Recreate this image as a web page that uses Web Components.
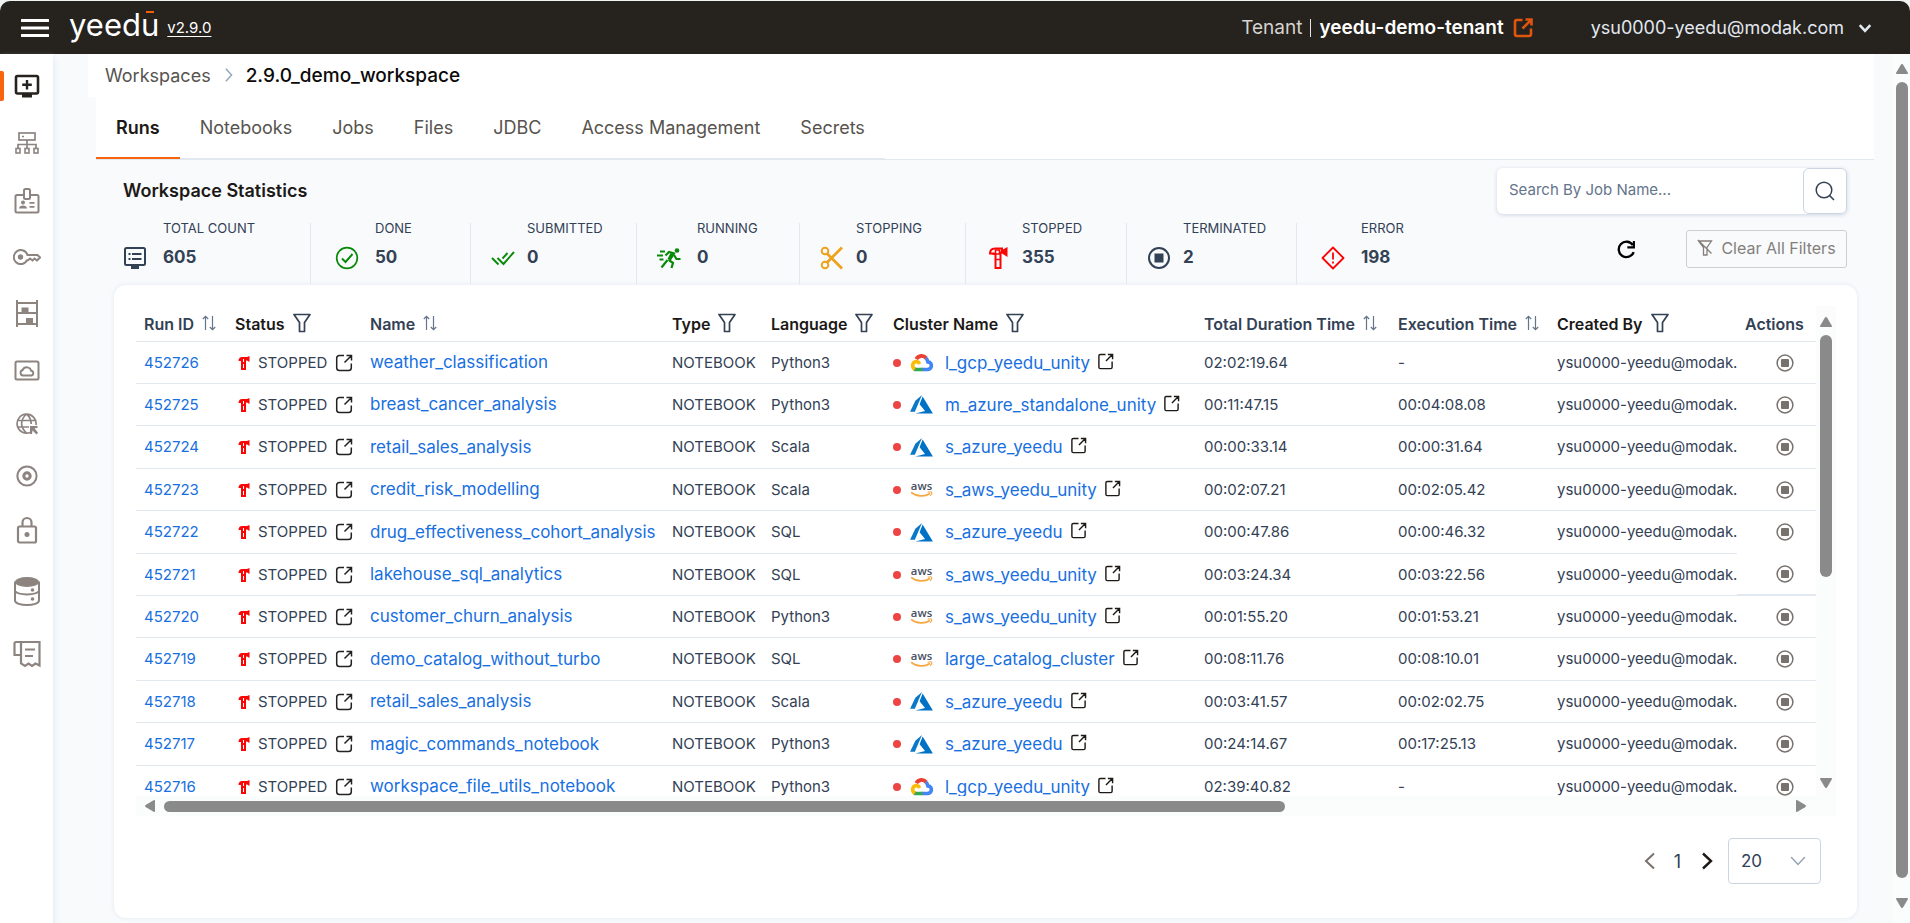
<!DOCTYPE html>
<html lang="en">
<head>
<meta charset="utf-8">
<title>Yeedu – Workspace runs</title>
<style>
  html, body { margin: 0; height: 100%; }
  body {
    font-family: Inter, "Open Sans", "Liberation Sans", sans-serif;
    font-size: 14px;
    color: #334155;
    background: #f8fafc;
  }
</style>
</head>
<body>
<yd-app></yd-app>
<script>
const define = (name, html, setup) => {
  const tpl = document.createElement('template');
  tpl.innerHTML = html;
  customElements.define(name, class extends HTMLElement {
    connectedCallback() {
      if (this.shadowRoot) return;
      const root = this.attachShadow({ mode: 'open' });
      root.append(tpl.content.cloneNode(true));
      if (setup) setup(root, this);
    }
  });
};

/* Icon set: [viewBox width, viewBox height, markup] */
const S = 'fill="none" stroke="currentColor"';
const ICONS = {
  menu: [28, 20, `<path d="M1 2.5h26M1 10h26M1 17.5h26" ${S} stroke-width="3" stroke-linecap="round"/>`],
  open: [18, 18, `<path d="M9 1.500H4.500A2.800 2.800 0 0 0 1.700 4.300v9.400a2.800 2.800 0 0 0 2.800 2.800h9A2.800 2.800 0 0 0 16.300 13.700V9.500M11.500 1.500h5v5M16.300 1.700 9.500 8.500" ${S} stroke-width="1.500"/>`],
  openSquare: [18, 18, `<path d="M9 1.500H3.500a1.500 1.500 0 0 0-1.500 1.500v12a1.500 1.500 0 0 0 1.500 1.500h11a1.500 1.500 0 0 0 1.500-1.500V9M11.500 1.500h5v5M16.300 1.700 9.500 8.500" ${S} stroke-width="1.500"/>`],
  tenant: [20, 20, `<path d="M9.500 2H4a2 2 0 0 0-2 2v12a2 2 0 0 0 2 2h12a2 2 0 0 0 2-2v-5.500" ${S} stroke-width="2.600"/><path d="M12.500 1.500h6v6M18 2 9.500 10.500" ${S} stroke-width="2.600"/>`],
  chevDown: [12, 12, `<path d="M1.500 3.500 6 8.500l4.500-5" ${S} stroke-width="2.200"/>`],
  chevThin: [16, 16, `<path d="M1.500 4.500 8 11.500l6.500-7" ${S} stroke-width="1.500" stroke-linecap="round"/>`],
  chevRight: [10, 18, `<path d="M2 2l6.500 7L2 16" ${S} stroke-width="1.600"/>`],
  left: [12, 18, `<path d="M10 1.500 2 9l8 7.500" ${S} stroke-width="2"/>`],
  right: [12, 18, `<path d="M2 1.500 10 9l-8 7.500" ${S} stroke-width="2.400"/>`],
  sort: [14, 16, `<path d="M3.500 15V1.500M.8 4l2.700-2.700L6.200 4M10.500 1v13.500M7.800 12l2.700 2.700L13.200 12" ${S} stroke-width="1.200"/>`],
  filter: [18, 20, `<path d="M1 1.500h16l-5.500 8V18.500h-5V9.500z" ${S} stroke-width="1.700" stroke-linejoin="round"/>`],
  filterOff: [16, 18, `<path d="M1.500 2h13l-4.500 6.500V16H6.500V8.500zM1 1l13.500 13.500" ${S} stroke-width="1.300"/>`],
  search: [20, 20, `<circle cx="9" cy="9" r="7.800" ${S} stroke-width="1.500"/><path d="m14.500 14.500 4.500 4.500" ${S} stroke-width="1.600"/>`],
  refresh: [18, 18, `<path d="M15.800 11.500A7.300 7.300 0 1 1 15 4.800" ${S} stroke-width="2.200"/><path d="M16 1v6h-6.200" ${S} stroke-width="2"/>`],
  /* statistics */
  list: [24, 24, `<rect x="2" y="2" width="20" height="17" rx="1.500" ${S} stroke-width="2"/><path d="M8 20h8v3H8z" fill="currentColor"/><path d="M5.500 8h2m1.500 0h9.500M5.500 13h2m1.500 0h9.500" ${S} stroke-width="2.200"/>`],
  done: [24, 24, `<circle cx="12" cy="12" r="10.300" ${S} stroke-width="1.700"/><path d="m7 12.500 3.500 3.500 7-8" ${S} stroke-width="1.900"/>`],
  submitted: [24, 24, `<path d="m1 12 6.500 6.500M6.500 12l6 6L23 6M11.500 12.500 16.500 7" ${S} stroke-width="1.900"/>`],
  running: [24, 24, `<circle cx="20" cy="4.500" r="2.300" fill="currentColor"/><path d="M3 5.500h5M0 9.500h6M2.500 13.500h4" ${S} stroke-width="1.800"/><path d="M8.500 9.500l3.500-3.500 5 1.500-4.500 7 3.500 2.500-1.500 5" ${S} stroke-width="2.200"/><path d="m13.500 7 3 1.500-3.500 6-2.500-1.500z" fill="currentColor"/><path d="m10.500 14-6 7.500M17 9l2.500 4h4" ${S} stroke-width="2.200"/>`],
  stopping: [24, 24, `<circle cx="5" cy="5" r="3.300" ${S} stroke-width="1.900"/><circle cx="5" cy="19" r="3.300" ${S} stroke-width="1.900"/><path d="M7 7.500 22 22.500M7 16.500 22 1.500" ${S} stroke-width="2.700"/>`],
  hammer: [24, 24, `<path d="M4 7.500C4 4.500 6 2.500 9 2.500h7v4h-1.500v15.500h-5V8H7.500V7.500z" ${S} stroke-width="2"/><path d="M16 4 21.500 1v10L16 7.500z" fill="currentColor"/><path d="M9.500 4h4v4h-4zM9.500 13.500h5" ${S} stroke-width="1.600"/>`],
  hammerSmall: [12, 14, `<path d="M.5 5C.5 2.300 2 1 4 1h5l2.500-1v6L9 4.500H8V14H3V5z" fill="currentColor"/><path d="M5.500 3v3M5.500 8v4" stroke="#fff" stroke-width="1"/>`],
  terminated: [24, 24, `<circle cx="12" cy="12" r="10" ${S} stroke-width="2"/><rect x="7.500" y="7.500" width="9" height="9" fill="currentColor"/>`],
  error: [24, 24, `<path d="M12 1.500 22.500 12 12 22.500 1.500 12z" ${S} stroke-width="1.800" stroke-linejoin="round"/><path d="M12 6.500v7M12 15.500v2" ${S} stroke-width="1.800"/>`],
  stop: [18, 18, `<circle cx="9" cy="9" r="7.900" ${S} stroke-width="1.500"/><rect x="5" y="5" width="8" height="8" rx="1" fill="currentColor"/>`],
  /* clouds */
  gcp: [24, 20, `<path d="M6.500 6.500A6.300 6.300 0 0 1 17 5.500" fill="none" stroke="#ea4335" stroke-width="4"/><path d="M16.500 5.500c1.500 1 2 2.500 2.200 3.800a4 4 0 0 1-.7 8H12" fill="none" stroke="#4285f4" stroke-width="3.800"/><path d="M13 17.300H6.500a4 4 0 0 1-2.200-.6" fill="none" stroke="#34a853" stroke-width="3.800"/><path d="M5 17A4.300 4.300 0 0 1 6 9c2 0 3.300 1 4 2.500" fill="none" stroke="#fbbc05" stroke-width="3.800"/>`],
  azure: [24, 20, `<path d="M12.500 0 5.500 6 0 17.500h5z" fill="#0a78c8"/><path d="m13.200 1.500-3.200 8.200 5.700 7.200L5.500 19.500H24z" fill="#0072c6"/>`],
  aws: [24, 18, `<text x="12" y="9.500" text-anchor="middle" font-family="Open Sans, sans-serif" font-size="12" font-weight="600" fill="#475063">aws</text><path d="M1 12c6 4.800 14.500 4.800 20 1.200" fill="none" stroke="#f5a742" stroke-width="1.800"/><path d="M18.500 12c2-.7 4-.6 4.300 0s-.2 2.200-1.500 3.700" fill="none" stroke="#f5a742" stroke-width="1.200"/>`],
  /* side navigation */
  navWorkspace: [26, 24, `<rect x="2" y="2" width="22" height="17.500" rx="1.500" ${S} stroke-width="2.600"/><path d="M8 19h10v4.500H8z" fill="currentColor"/><path d="M13 6v9.500M8.200 10.800h9.600" ${S} stroke-width="2.400"/>`],
  navCluster: [24, 22, `<rect x="4" y="1" width="16" height="7" ${S} stroke-width="1.700"/><path d="M7 4.500h2M12 8v8M3 16v-3.500h18V16" ${S} stroke-width="1.700"/><rect x="1" y="16.500" width="4" height="4.500" ${S} stroke-width="1.600"/><rect x="10" y="16.500" width="4" height="4.500" ${S} stroke-width="1.600"/><rect x="19" y="16.500" width="4" height="4.500" ${S} stroke-width="1.600"/>`],
  navBadge: [26, 26, `<path d="M10 7H3a1.500 1.500 0 0 0-1.500 1.500v14.500a1.500 1.500 0 0 0 1.500 1.500h20a1.500 1.500 0 0 0 1.500-1.500V8.500A1.500 1.500 0 0 0 23 7h-7" ${S} stroke-width="2"/><rect x="10" y="1" width="6" height="10" rx="1.500" ${S} stroke-width="2"/><circle cx="9" cy="14.500" r="2" fill="currentColor"/><path d="M5 20.500c0-4 8-4 8 0zM15.500 14h5v1.800h-5zM15.500 18h5v1.800h-5z" fill="currentColor"/>`],
  navKey: [28, 16, `<path d="M14.500 6h10l2.500 2.500-3 3-2.500-2-2 2-2.500-2-2 1.800h-1A7 7 0 1 1 14.500 6z" ${S} stroke-width="2"/><circle cx="7.500" cy="8" r="2.700" fill="currentColor"/>`],
  navShelf: [24, 28, `<path d="M2 1v27M22 1v27M2 4h20M2 14h20M2 25h20" ${S} stroke-width="2"/><path d="M6.500 8.500h7V14h-7zM11 19h7v6h-7z" fill="currentColor"/>`],
  navCloud: [26, 21, `<rect x="1.500" y="1.500" width="23" height="18" rx="1.500" ${S} stroke-width="2"/><path d="M9 15.500a2.800 2.800 0 0 1-.3-5.500 4.500 4.500 0 0 1 8.500.8 2.400 2.400 0 0 1 .3 4.700z" ${S} stroke-width="1.900"/>`],
  navGlobe: [22, 22, `<path d="M14 19.500A9.500 9.500 0 1 1 20 12M1.500 7.500h18.500M1.500 14H13M10.500 1c-6.500 6-6.500 13 0 19M10.500 1c3.500 3 4.700 6.500 4.700 10" ${S} stroke-width="1.700"/><path d="M14 13h7.500v2l-3 .3 3.500 4.500-1.500 1.700-4-4-.5 3.500h-2z" fill="currentColor"/>`],
  navDisc: [22, 22, `<circle cx="11" cy="11" r="9.600" ${S} stroke-width="2"/><circle cx="11" cy="11" r="3.200" ${S} stroke-width="3"/>`],
  navLock: [22, 28, `<rect x="2" y="10.500" width="18" height="16" rx="1.500" ${S} stroke-width="2.200"/><path d="M6.500 10.500V6.500a4.500 4.500 0 0 1 9 0v4" ${S} stroke-width="2.200"/><circle cx="11" cy="18.500" r="2.500" fill="currentColor"/>`],
  navDb: [26, 30, `<path d="M1 5.500v19C1 27.500 7 29 13 29s12-1.500 12-4.500v-19" ${S} stroke-width="2"/><ellipse cx="13" cy="6" rx="12" ry="5" fill="currentColor"/><path d="M1 15c3 4.500 21 4.500 24 0" ${S} stroke-width="2"/><circle cx="18.500" cy="14" r="1.800" fill="currentColor"/><circle cx="18.500" cy="23" r="1.800" fill="currentColor"/>`],
  navBill: [28, 28, `<path d="M8 2h18.500v23.500l-4-2-3.500 2.500-3.500-2.500-3.500 2.500-4-2.500zM8 15H1.500V3.500A1.500 1.500 0 0 1 3 2h5" ${S} stroke-width="2.200"/><path d="M12 9.500h10M12 16h8" ${S} stroke-width="2.200"/>`],
  up: [12, 10, `<path d="M6 0c.6 0 1 .5 1.300 1L12 9c0 .6-.4 1-1 1H1c-.6 0-1-.4-1-1l4.700-8C5 .5 5.400 0 6 0z" fill="currentColor"/>`],
  down: [12, 10, `<path d="M6 10c.6 0 1-.5 1.300-1L12 1c0-.6-.4-1-1-1H1C.4 0 0 .4 0 1l4.700 8c.3.500.7 1 1.300 1z" fill="currentColor"/>`],
  prev: [10, 12, `<path d="M0 6c0-.6.500-1 1-1.300L9 0c.6 0 1 .4 1 1v10c0 .6-.4 1-1 1L1 7.300C.5 7 0 6.600 0 6z" fill="currentColor"/>`],
  next: [10, 12, `<path d="M10 6c0-.6-.5-1-1-1.300L1 0C.4 0 0 .4 0 1v10c0 .6.400 1 1 1l8-4.700c.5-.3 1-.7 1-1.300z" fill="currentColor"/>`]
};

/* <yd-icon name width> : height follows the icon's own proportions */
define('yd-icon', `<style>:host{display:inline-flex;flex:none;vertical-align:middle}svg{display:block}</style>`, (root, host) => {
  const [w, h, body] = ICONS[host.getAttribute('name')];
  const width = +host.getAttribute('width') || w;
  root.innerHTML += `<svg width="${width}" height="${Math.round(width * h / w)}" viewBox="0 0 ${w} ${h}" aria-hidden="true">${body}</svg>`;
});

define('yd-header', `
<style>
  :host { display: block; background: #f1f3f2; }
  header { display: flex; align-items: center; height: 53px; margin-top: 1px; padding: 0 38px 0 21px; background: #26221d; color: #fff; border-radius: 10px 10px 0 0; font-size: 18px; }
  button { display: flex; align-items: center; border: 0; padding: 0; background: none; color: inherit; font: inherit; }
  .logo { position: relative; margin-left: 20px; font-size: 31px; line-height: 36px; height: 42px; color: #fff; text-decoration: none; }
  .logo i { position: absolute; right: 5px; top: 4px; width: 8px; height: 2px; background: #f55f0a; }
  .version { margin-left: 8px; color: #fff; font-size: 15px; text-underline-offset: 3px; }
  .tenant { display: flex; align-items: center; margin-left: auto; color: #d6d3d1; font-size: 19px; }
  .tenant b { margin: 0 9px 0 8px; padding-left: 8px; color: #fff; font-weight: 600; line-height: 18px; border-left: 1px solid #e7e5e4; }
  .tenant a { display: flex; color: #e0560f; }
  .user { gap: 14px; margin-left: 58px; color: #e2e8f0; }
</style>
<header>
  <button aria-label="Menu"><yd-icon name="menu"></yd-icon></button>
  <a class="logo" href="#home">yeedu<i></i></a>
  <a class="version" href="#version">v2.9.0</a>
  <div class="tenant">Tenant<b>yeedu-demo-tenant</b><a href="#tenant" aria-label="Open tenant"><yd-icon name="tenant"></yd-icon></a></div>
  <button class="user"><span>ysu0000-yeedu@modak.com</span><yd-icon name="chevDown" width="14"></yd-icon></button>
</header>`);

define('yd-sidebar', `
<style>
  :host { display: block; width: 53px; flex: none; background: #fff; box-shadow: 1px 4px 6px #e2e8f0; }
  nav { display: flex; flex-direction: column; gap: 34px; padding-top: 20px; }
  a { display: flex; align-items: center; justify-content: center; width: 53px; color: #8d8480; position: relative; }
  a.active { color: #26221d; }
  a.active::before { content: ""; position: absolute; left: 0; top: -3px; width: 4px; height: 30px; background: #f9640f; border-radius: 0 2px 2px 0; }
</style>
<nav aria-label="Main"></nav>`, root => {
  const items = [['navWorkspace', 24, 'Workspaces'], ['navCluster', 22, 'Clusters'], ['navBadge', 26, 'Credentials'], ['navKey', 18, 'Keys'],
    ['navShelf', 26, 'Volumes'], ['navCloud', 20, 'Cloud'], ['navGlobe', 20, 'Network'], ['navDisc', 16, 'Disks'],
    ['navLock', 24, 'Secrets'], ['navDb', 30, 'Metastore'], ['navBill', 28, 'Billing']];
  root.querySelector('nav').innerHTML = items.map(([n, h, label], i) =>
    `<a href="#${label.toLowerCase()}" aria-label="${label}" style="height:${h}px"${i ? '' : ' class="active"'}><yd-icon name="${n}"></yd-icon></a>`).join('');
});

/* Scroll bar: a thumb between two arrows; ratio holds the thumb's and the free track's proportions */
define('yd-scrollbar', `
<style>
  :host { display: flex; flex-direction: column; align-items: center; flex: none; width: 17px; background: #fbfcfc; color: #8a8a8a; }
  :host([horizontal]) { flex-direction: row; width: auto; height: 20px; }
  .thumb { width: 12px; border-radius: 6px; background: #8a8a8a; margin: 8px 0 0; }
  :host([horizontal]) .thumb { width: auto; height: 11px; margin: 0 0 0 9px; }
</style>
<div class="thumb"></div><div class="rest"></div>`, (root, host) => {
  const [before, after] = host.hasAttribute('horizontal') ? ['prev', 'next'] : ['up', 'down'];
  const [size, rest] = host.getAttribute('ratio').split(' ');
  const thumb = root.querySelector('.thumb');
  const track = root.querySelector('.rest');
  thumb.style.flex = `${size} 1 0px`;
  track.style.flex = `${rest} 1 0px`;
  thumb.insertAdjacentHTML('beforebegin', `<yd-icon name="${before}"></yd-icon>`);
  track.insertAdjacentHTML('afterend', `<yd-icon name="${after}"></yd-icon>`);
});

define('yd-breadcrumb', `
<style>
  :host { display: flex; align-items: center; height: 43px; margin: 0 19px 0 35px; padding: 0 17px 1px; background: #fff; font-size: 18px; box-sizing: border-box; }
  a { color: #57534e; text-decoration: none; }
  yd-icon { margin: 0 13px; color: #94a3b8; }
  b { color: #0c0a09; font-weight: 500; font-size: 19px; }
</style>
<a href="#workspaces">Workspaces</a><yd-icon name="chevRight" width="9"></yd-icon><b><slot></slot></b>`);

define('yd-tabs', `
<style>
  :host { display: block; margin: 0 19px 0 43px; background: #fff; border-bottom: 1px solid #e2e8f0; }
  nav { display: flex; width: max-content; height: 62px; box-shadow: inset 0 -1px #e2e8f0; }
  a { display: flex; align-items: center; height: 60px; padding: 0 20px; color: #57534e; text-decoration: none; font-size: 18px; border-bottom: 2px solid transparent; }
  a.active { color: #1c1917; font-weight: 600; border-color: #f9640f; }
</style>
<nav><a class="active" href="#runs">Runs</a><a href="#notebooks">Notebooks</a><a href="#jobs">Jobs</a><a href="#files">Files</a><a href="#jdbc">JDBC</a><a href="#access">Access Management</a><a href="#secrets">Secrets</a></nav>`);

define('yd-stat', `
<style>
  :host { display: flex; align-items: flex-end; gap: var(--gap, 12px); box-sizing: border-box; padding: 0 0 14px var(--pad, 20px); height: 61px; font-size: 13px; line-height: 16px; color: #334155; border-left: 1px solid #e2e8f0; }
  :host(:first-child) { border-color: transparent; }
  yd-icon { color: var(--tone, #334155); }
  div { display: flex; flex-direction: column; justify-content: space-between; height: 50px; }
  b { font-size: 17px; line-height: 26px; font-weight: 700; }
</style>
<div><slot></slot><b></b></div>`, (root, host) => {
  root.querySelector('div').insertAdjacentHTML('beforebegin', `<yd-icon name="${host.getAttribute('icon')}"></yd-icon>`);
  root.querySelector('b').textContent = host.getAttribute('value');
});

define('yd-stats', `
<style>
  :host { display: flex; justify-content: space-between; padding: 8px 46px 0 61px; height: 117px; }
  h2 { margin: 12px 0 0 9px; font-size: 18px; line-height: 22px; font-weight: 600; color: #1c1917; }
  .cells { display: grid; grid-template-columns: 196px 160px 166px 163px 166px 161px 170px auto; margin-top: 21px; }
  .wide { --gap: 16px; }
  .tools { display: flex; flex-direction: column; align-items: flex-end; gap: 16px; }
  form { display: flex; margin: 0; border-radius: 6px; box-shadow: 0 1px 4px #cbd5e1; background: #fff; }
  input { box-sizing: border-box; width: 306px; height: 46px; border: 0; padding: 0 12px 3px; background: none; font: inherit; font-size: 15px; color: #334155; }
  input::placeholder { color: #64748b; opacity: 1; }
  button { font: inherit; }
  form button { box-sizing: border-box; width: 44px; height: 46px; padding: 0; border: 1px solid #cbd5e1; border-radius: 6px; background: #fff; color: #334155; }
  .row { display: flex; align-items: center; gap: 50px; }
  .refresh { display: flex; padding: 0; border: 0; background: none; color: #000; }
  .clear { display: flex; align-items: center; justify-content: center; gap: 8px; box-sizing: border-box; width: 161px; height: 38px; padding: 0 0 2px; border: 1px solid #d0cfcd; border-radius: 3px; background: none; color: #857f7b; font-size: 16px; }
</style>
<section>
  <h2>Workspace Statistics</h2>
  <div class="cells">
    <yd-stat class="wide" icon="list" value="605" style="--pad:8px">TOTAL COUNT</yd-stat>
    <yd-stat class="wide" icon="done" value="50" style="--pad:24px;--tone:#088a08">DONE</yd-stat>
    <yd-stat icon="submitted" value="0" style="--tone:#088a08">SUBMITTED</yd-stat>
    <yd-stat class="wide" icon="running" value="0" style="--tone:#088a08">RUNNING</yd-stat>
    <yd-stat icon="stopping" value="0" style="--tone:#eea11a">STOPPING</yd-stat>
    <yd-stat icon="hammer" value="355" style="--tone:#fb0505">STOPPED</yd-stat>
    <yd-stat icon="terminated" value="2">TERMINATED</yd-stat>
    <yd-stat class="wide" icon="error" value="198" style="--pad:24px;--tone:#fb0505">ERROR</yd-stat>
  </div>
</section>
<div class="tools">
  <form role="search"><input type="text" placeholder="Search By Job Name..." aria-label="Search by job name"><button type="button" aria-label="Search"><yd-icon name="search"></yd-icon></button></form>
  <div class="row"><button class="refresh" aria-label="Refresh"><yd-icon name="refresh" width="19"></yd-icon></button><button class="clear"><yd-icon name="filterOff"></yd-icon>Clear All Filters</button></div>
</div>`);

const RUNS = [
  ['452726', 'weather_classification', 'Python3', 'gcp', 'l_gcp_yeedu_unity', '02:02:19.64', '-'],
  ['452725', 'breast_cancer_analysis', 'Python3', 'azure', 'm_azure_standalone_unity', '00:11:47.15', '00:04:08.08'],
  ['452724', 'retail_sales_analysis', 'Scala', 'azure', 's_azure_yeedu', '00:00:33.14', '00:00:31.64'],
  ['452723', 'credit_risk_modelling', 'Scala', 'aws', 's_aws_yeedu_unity', '00:02:07.21', '00:02:05.42'],
  ['452722', 'drug_effectiveness_cohort_analysis', 'SQL', 'azure', 's_azure_yeedu', '00:00:47.86', '00:00:46.32'],
  ['452721', 'lakehouse_sql_analytics', 'SQL', 'aws', 's_aws_yeedu_unity', '00:03:24.34', '00:03:22.56'],
  ['452720', 'customer_churn_analysis', 'Python3', 'aws', 's_aws_yeedu_unity', '00:01:55.20', '00:01:53.21'],
  ['452719', 'demo_catalog_without_turbo', 'SQL', 'aws', 'large_catalog_cluster', '00:08:11.76', '00:08:10.01'],
  ['452718', 'retail_sales_analysis', 'Scala', 'azure', 's_azure_yeedu', '00:03:41.57', '00:02:02.75'],
  ['452717', 'magic_commands_notebook', 'Python3', 'azure', 's_azure_yeedu', '00:24:14.67', '00:17:25.13'],
  ['452716', 'workspace_file_utils_notebook', 'Python3', 'gcp', 'l_gcp_yeedu_unity', '02:39:40.82', '-']
];

define('yd-runs-table', `
<style>
  :host { display: flex; flex-direction: column; flex: 1; min-height: 0; }
  .frame { display: flex; flex: 1; min-height: 0; }
  .view { flex: 1; overflow: hidden; }
  table { width: 100%; table-layout: fixed; border-collapse: separate; border-spacing: 0; font-size: 15px; }
  th, td { box-sizing: border-box; padding: 0 0 0 8px; text-align: left; white-space: nowrap; overflow: hidden; border-bottom: 1px solid #e2e8f0; }
  th { height: 36px; font-size: 16px; font-weight: 600; color: #334155; }
  th.f { color: #1c1917; }
  th div { display: flex; align-items: center; }
  td { height: 42px; line-height: 20px; }
  tr:nth-child(5n+3) td, tr:nth-child(5n) td { height: 43px; }
  tr:nth-child(5) td:last-child { border-color: transparent; }
  tr:nth-child(6) td:last-child { border-bottom-width: 2px; }
  th yd-icon { margin: 0 0 2px 8px; color: #64748b; }
  th.f yd-icon { color: #334155; }
  a { color: #186fdf; text-decoration: none; }
  a.name { font-size: 17px; }
  .cell { display: flex; align-items: center; }
  .state { gap: 8px; padding-left: 3px; }
  .state a { display: flex; color: #222; }
  .hammer { color: #fb0505; }
  .dot { width: 8px; height: 8px; margin-right: 9px; border-radius: 50%; background: #ef4444; }
  .cell .name { margin: 0 7px 0 12px; }
  .cell .out { display: flex; margin-bottom: 3px; color: #1c1917; }
  td:last-child { padding-left: 39px; }
  td button { display: flex; padding: 0; border: 0; background: none; color: #77726e; }
  .side { display: flex; flex: none; width: 20px; justify-content: center; padding-top: 11px; padding-bottom: 8px; background: #fcfcfc; }
</style>
<div class="frame">
  <div class="view"><table>
    <colgroup><col style="width:91px"><col style="width:135px"><col style="width:302px"><col style="width:99px"><col style="width:122px"><col style="width:311px"><col style="width:194px"><col style="width:159px"><col><col style="width:79px"></colgroup>
    <thead><tr></tr></thead><tbody></tbody>
  </table></div>
  <div class="side"><yd-scrollbar ratio="242 201"></yd-scrollbar></div>
</div>
<slot></slot>`, root => {
  const heads = [['Run ID', 'sort'], ['Status', 'filter'], ['Name', 'sort'], ['Type', 'filter'], ['Language', 'filter'], ['Cluster Name', 'filter'],
    ['Total Duration Time', 'sort'], ['Execution Time', 'sort'], ['Created By', 'filter'], ['Actions', '']];
  root.querySelector('thead tr').innerHTML = heads.map(([t, i]) =>
    `<th scope="col"${i === 'filter' ? ' class="f"' : ''}><div>${t}${i ? `<yd-icon name="${i}"></yd-icon>` : ''}</div></th>`).join('');
  root.querySelector('tbody').innerHTML = RUNS.map(([id, name, lang, cloud, cluster, total, exec]) => `<tr>
    <td><a href="#run-${id}">${id}</a></td>
    <td><div class="cell state"><yd-icon class="hammer" name="hammerSmall"></yd-icon>STOPPED<a href="#log-${id}" aria-label="Open run"><yd-icon name="open"></yd-icon></a></div></td>
    <td><a class="name" href="#nb-${id}">${name}</a></td>
    <td>NOTEBOOK</td><td>${lang}</td>
    <td><div class="cell"><span class="dot"></span><yd-icon name="${cloud}" width="23"></yd-icon><a class="name" href="#cluster-${id}">${cluster}</a><a class="out" href="#cluster-tab-${id}" aria-label="Open cluster"><yd-icon name="openSquare" width="17"></yd-icon></a></div></td>
    <td>${total}</td><td>${exec}</td><td>ysu0000-yeedu@modak.com</td>
    <td><button aria-label="Stop run"><yd-icon name="stop"></yd-icon></button></td></tr>`).join('');
});

define('yd-pager', `
<style>
  :host { display: flex; justify-content: flex-end; align-items: center; padding: 22px 15px 34px; font-size: 18px; color: #334155; }
  button { display: flex; padding: 0; border: 0; background: none; color: #78716c; }
  button.next { color: #1c1917; }
  span { margin: 0 20px 0 18px; }
  label { position: relative; display: flex; margin-left: 15px; }
  select { appearance: none; box-sizing: border-box; width: 93px; height: 46px; padding: 0 12px; border: 1px solid #cbd5e1; border-radius: 4px; background: #fff; font: inherit; font-size: 17px; color: #334155; }
  label yd-icon { position: absolute; right: 15px; top: 15px; color: #94a3b8; pointer-events: none; }
</style>
<button aria-label="Previous page"><yd-icon name="left"></yd-icon></button><span>1</span><button class="next" aria-label="Next page"><yd-icon name="right"></yd-icon></button>
<label><select aria-label="Rows per page"><option>20</option><option>50</option></select><yd-icon name="chevThin"></yd-icon></label>`);

define('yd-app', `
<style>
  :host { display: flex; flex-direction: column; height: 100vh; overflow: hidden; }
  .body { display: flex; flex: 1; min-height: 0; }
  main { display: flex; flex-direction: column; flex: 1; min-width: 0; }
  .card { display: flex; flex-direction: column; flex: 1; min-height: 0; margin: 0 36px 5px 61px; padding: 21px 21px 0 22px; background: #fff; border-radius: 12px; box-shadow: 0 0 4px #e2e8f0; }
  .page { display: flex; padding: 10px 0 15px; background: #fbfcfc; }
  .xbar { padding: 0 30px 0 9px; }
</style>
<yd-header></yd-header>
<div class="body">
  <yd-sidebar></yd-sidebar>
  <main>
    <yd-breadcrumb>2.9.0_demo_workspace</yd-breadcrumb>
    <yd-tabs></yd-tabs>
    <yd-stats></yd-stats>
    <div class="card">
      <yd-runs-table><yd-scrollbar class="xbar" horizontal ratio="1120 510"></yd-scrollbar></yd-runs-table>
      <yd-pager></yd-pager>
    </div>
  </main>
  <div class="page"><yd-scrollbar ratio="795 20"></yd-scrollbar></div>
</div>`);
</script>
</body>
</html>
